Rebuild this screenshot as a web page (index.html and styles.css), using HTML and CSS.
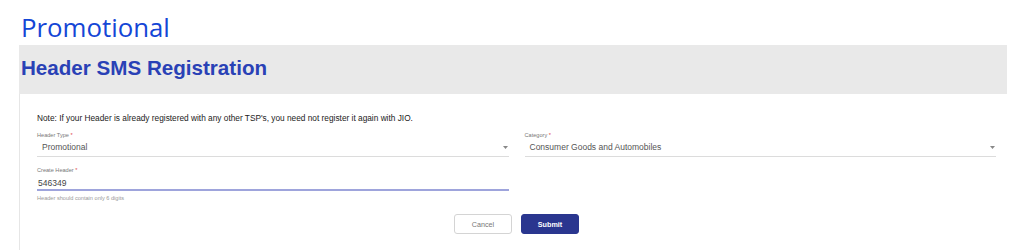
FILE: index.html
```html
<!DOCTYPE html>
<html>
  <head>
    <title>Header SMS Registration</title>
    <meta name="viewport" content="width=device-width,initial-scale=1">
    <link rel="stylesheet" href="styles.css">
  </head>
  <body>
    <h1 class="page-title">Promotional</h1>
    <div class="panel">
      <div class="panel-head">
        <h2>Header SMS Registration</h2>
      </div>
      <form class="panel-body">
        <p class="note">Note: If your Header is already registered with any other TSP's, you need not register it again with JIO.</p>
        <div class="row">
          <div class="field">
            <label>Header Type <span class="req">*</span></label>
            <div class="control select">
              <span>Promotional</span>
              <svg width="5" height="3" viewBox="0 0 5 3"><path d="M0 0h5L2.5 3z" fill="#888"/></svg>
            </div>
          </div>
          <div class="field">
            <label>Category <span class="req">*</span></label>
            <div class="control select">
              <span>Consumer Goods and Automobiles</span>
              <svg width="5" height="3" viewBox="0 0 5 3"><path d="M0 0h5L2.5 3z" fill="#888"/></svg>
            </div>
          </div>
        </div>
        <div class="row row-second">
          <div class="field">
            <label>Create Header <span class="req">*</span></label>
            <div class="control input focused">
              <span>546349</span>
            </div>
            <div class="hint">Header should contain only 6 digits</div>
          </div>
          <div></div>
        </div>
        <div class="actions">
          <button type="button" class="btn btn-cancel">Cancel</button>
          <button type="button" class="btn btn-submit">Submit</button>
        </div>
      </form>
    </div>
  </body>
</html>
```

FILE: styles.css
```css
body {
  margin: 0;
  background: white;
  font-family: "Liberation Sans", Arial, sans-serif;
}

.page-title {
  margin: 0;
  padding: 9px 0 0 21px;
  height: 36px;
  font-family: "Open Sans", sans-serif;
  font-weight: 400;
  font-size: 25.8px;
  line-height: 36px;
  color: #1446d6;
}

.panel {
  margin-left: 19px;
  width: 988px;
}

.panel-head {
  height: 49px;
  background: #e9e9e9;
  padding-left: 2px;
}

.panel-head h2 {
  margin: 0;
  font-size: 20.6px;
  line-height: 46px;
  font-weight: bold;
  color: #2941b6;
}

.panel-body {
  border-left: 1px solid #e6e6e6;
  padding: 18px 11px 16px 17px;
}

.note {
  margin: 0 0 7px;
  font-size: 8.3px;
  line-height: 12px;
  color: #222;
}

.row {
  display: grid;
  grid-template-columns: 1fr 1fr;
  gap: 16px;
}

.row-second {
  margin-top: 9px;
}

.field label {
  display: block;
  font-size: 5.6px;
  line-height: 8px;
  color: #777;
}

.req {
  color: #e04848;
}

.control {
  display: flex;
  align-items: center;
  justify-content: space-between;
  font-size: 8.5px;
  line-height: 12px;
  color: #555;
}

.select {
  padding: 2px 1px 3px 5px;
  border-bottom: 1px solid #dcdcdc;
}

.input {
  padding: 3px 1px 0 1px;
  color: #444;
}

.focused {
  border-bottom: 2px solid #9ea4dc;
}

.hint {
  margin-top: 3px;
  font-size: 5.6px;
  line-height: 8px;
  color: #999;
}

.actions {
  display: flex;
  justify-content: center;
  gap: 9px;
  margin-top: 12px;
}

.btn {
  width: 58px;
  height: 20px;
  border-radius: 3px;
  font-family: "Liberation Sans", Arial, sans-serif;
  font-size: 7.2px;
  padding: 0;
}

.btn-cancel {
  background: white;
  border: 1px solid #d4d4d4;
  color: #777;
}

.btn-submit {
  background: #2a368f;
  border: 1px solid #2a368f;
  color: white;
  font-weight: bold;
}
```
